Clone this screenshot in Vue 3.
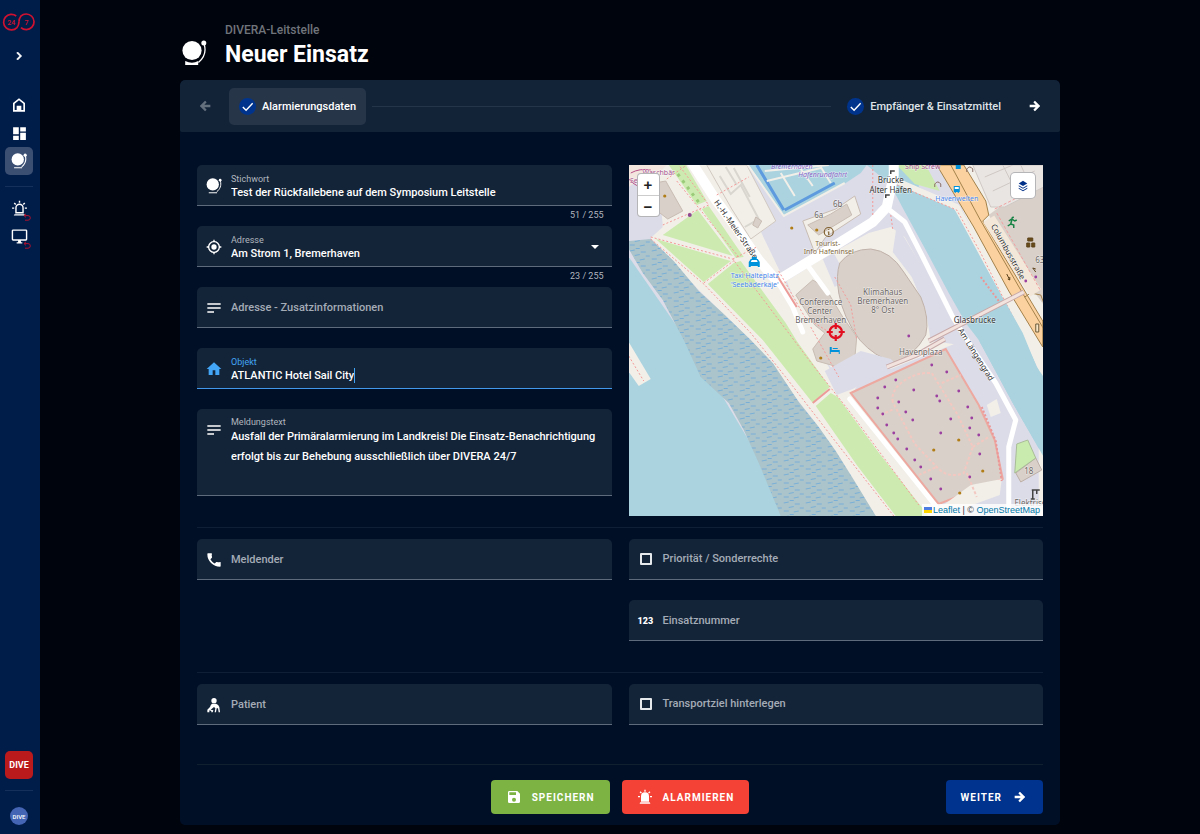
<script setup>
import { ref } from 'vue'

const icons = {
  chevron: 'M8.59,16.58L13.17,12L8.59,7.41L10,6L16,12L10,18L8.59,16.58Z',
  home: 'M12,2L3,9V22H21V9L12,2M18.500,19.500H15.500V13H8.500V19.500H5.500V10L12,5L18.500,10Z',
  dashboard: 'M13,3V9H21V3M13,21H21V11H13M3,21H11V15H3M3,13H11V3H3V13Z',
  alarmOutline:
    'M6,6.9L3.87,4.78L5.28,3.37L7.4,5.5L6,6.9M13,1V4H11V1H13M20.13,4.78L18,6.9L16.6,5.5L18.72,3.37L20.13,4.78M4.5,10.5V12.5H1.5V10.5H4.5M19.5,10.5H22.5V12.5H19.5V10.5M6,20H18A2,2 0 0,1 20,22H4A2,2 0 0,1 6,20M12,5A6,6 0 0,1 18,11V19H6V11A6,6 0 0,1 12,5M12,7A4,4 0 0,0 8,11V17H16V11A4,4 0 0,0 12,7Z',
  alarm:
    'M6,6.9L3.87,4.78L5.28,3.37L7.4,5.5L6,6.9M13,1V4H11V1H13M20.13,4.78L18,6.9L16.6,5.5L18.72,3.37L20.13,4.78M4.5,10.5V12.5H1.5V10.5H4.5M19.5,10.5H22.5V12.5H19.5V10.5M6,20H18A2,2 0 0,1 20,22H4A2,2 0 0,1 6,20M12,5A6,6 0 0,1 18,11V19H6V11A6,6 0 0,1 12,5Z',
  monitor:
    'M21,16H3V4H21M21,2H3C1.89,2 1,2.89 1,4V16A2,2 0 0,0 3,18H10V20H8V22H16V20H14V18H21A2,2 0 0,0 23,16V4C23,2.89 22.1,2 21,2Z',
  left: 'M20,10V14H11L14.5,17.5L12.08,19.92L4.16,12L12.08,4.08L14.5,6.5L11,10H20Z',
  right: 'M4,10V14H13L9.5,17.5L11.92,19.92L19.84,12L11.92,4.08L9.5,6.5L13,10H4Z',
  gps: 'M12,8A4,4 0 0,1 16,12A4,4 0 0,1 12,16A4,4 0 0,1 8,12A4,4 0 0,1 12,8M3.05,13H1V11H3.05C3.5,6.83 6.83,3.5 11,3.05V1H13V3.05C17.17,3.5 20.5,6.83 20.95,11H23V13H20.95C20.5,17.17 17.17,20.5 13,20.95V23H11V20.95C6.83,20.5 3.5,17.17 3.05,13M12,5A7,7 0 0,0 5,12A7,7 0 0,0 12,19A7,7 0 0,0 19,12A7,7 0 0,0 12,5Z',
  lines: 'M22,5V7H2V5H22M2,19H12V17H2V19M2,13H22V11H2V13Z',
  house: 'M10,21V14H14V21H20V12H23L12,2L1,12H4V21H10Z',
  phone:
    'M6.62,10.79C8.06,13.62 10.38,15.94 13.21,17.38L15.41,15.18C15.69,14.9 16.08,14.82 16.43,14.93C17.55,15.3 18.75,15.5 20,15.5A1,1 0 0,1 22,16.5V21A1,1 0 0,1 21,22A19,19 0 0,1 2,3A1,1 0 0,1 3,2H7.5A1,1 0 0,1 8.5,4C8.5,5.25 8.7,6.45 9.07,7.57C9.18,7.92 9.1,8.31 8.82,8.59L6.62,10.79Z',
  save: 'M15,9H5V5H15M12,19A3,3 0 0,1 9,16A3,3 0 0,1 12,13A3,3 0 0,1 15,16A3,3 0 0,1 12,19M17,3H5C3.89,3 3,3.9 3,5V19A2,2 0 0,0 5,21H19A2,2 0 0,0 21,19V7L17,3Z',
  down: 'M6,9L12,15L18,9H6Z',
}

const keyword = ref('Test der Rückfallebene auf dem Symposium Leitstelle')
const address = ref('Am Strom 1, Bremerhaven')
const addressInfo = ref('')
const place = ref('ATLANTIC Hotel Sail City')
const message = ref(
  'Ausfall der Primäralarmierung im Landkreis! Die Einsatz-Benachrichtigung erfolgt bis zur Behebung ausschließlich über DIVERA 24/7'
)
const reporter = ref('')
const priority = ref(false)
const number = ref('')
const patient = ref('')
const transport = ref(false)

const violet = [
  [303, 200], [318, 207], [267, 215], [256, 222], [249, 233], [249, 243], [254, 249], [258, 260],
  [265, 268], [269, 274], [278, 284], [286, 295], [292, 302], [302, 314], [312, 324], [285, 225],
  [270, 237], [277, 247], [284, 255], [308, 231], [311, 236], [330, 226], [339, 242], [343, 253],
  [341, 263], [350, 270], [322, 254], [312, 268], [351, 289], [341, 312], [280, 171], [407, 112], [397, 116],
]
const amber = [[330, 275], [305, 285], [354, 306], [331, 328], [36, 31], [163, 63], [188, 65], [192, 193]]
</script>

<template>
  <div class="app">
    <nav class="side" aria-label="Hauptmenü">
      <a href="#" class="side-item logo" aria-label="DIVERA 24/7">
        <svg width="34" height="20" viewBox="0 0 34 20">
          <g fill="none" stroke="#d01231" stroke-width="1.700">
            <path d="M14.200 4A7.800 7.800 0 1 0 15 15.600Q17 13 17 9.800" />
            <path d="M19 15.600A7.800 7.800 0 1 0 18.800 4.200Q17 6.500 17 9.800" />
          </g>
          <text x="9.300" y="12.600" text-anchor="middle">24</text>
          <text x="24.600" y="12.600" text-anchor="middle">7</text>
        </svg>
      </a>
      <button class="side-item chevron" aria-label="Menü öffnen">
        <svg class="i16" viewBox="0 0 24 24"><path :d="icons.chevron" stroke="#fff" /></svg>
      </button>
      <a href="#" class="side-item home" aria-label="Start"><svg class="i16" viewBox="0 0 24 24"><path fill-rule="evenodd" :d="icons.home" /></svg></a>
      <a href="#" class="side-item" aria-label="Übersicht"><svg class="i17" viewBox="0 0 24 24"><path :d="icons.dashboard" /></svg></a>
      <a href="#" class="side-item active" aria-label="Einsätze">
        <svg class="i16" viewBox="0 0 26 26">
          <circle cx="11" cy="10.500" r="10" /><circle cx="23" cy="3.500" r="2.600" />
          <path d="M5 24h13M23.400 5c1.800 7-.4 13-6 17.500" fill="none" stroke="#fff" stroke-width="1.800" />
        </svg>
      </a>
      <hr class="side-rule" />
      <a href="#" class="side-item" aria-label="Alarme">
        <svg class="i17" viewBox="0 0 24 24"><path fill-rule="evenodd" :d="icons.alarmOutline" /></svg>
        <svg class="back" viewBox="0 0 8 8"><path d="M3 .8 1 2.600 3 4.400M1.200 2.600H5A2.300 2.300 0 0 1 5 7.200H2" /></svg>
      </a>
      <a href="#" class="side-item" aria-label="Monitor">
        <svg class="i17" viewBox="0 0 24 24"><path fill-rule="evenodd" :d="icons.monitor" /></svg>
        <svg class="back" viewBox="0 0 8 8"><path d="M3 .8 1 2.600 3 4.400M1.200 2.600H5A2.300 2.300 0 0 1 5 7.200H2" /></svg>
      </a>
      <span class="grow"></span>
      <button class="side-item unit">DIVE</button>
      <hr class="side-rule" />
      <button class="avatar">DIVE</button>
    </nav>

    <main class="page">
      <header class="head">
        <svg class="head-icon" viewBox="0 0 26 26">
          <circle cx="11" cy="10.500" r="9.600" /><circle cx="22.800" cy="3" r="2.500" />
          <path d="M4.200 21q7 3.400 13 0v4H4.200z" />
          <path d="M23.400 5c1.800 7-.4 13-6 17.500" fill="none" stroke="#fff" stroke-width="1.300" />
        </svg>
        <div>
          <p class="sub">DIVERA-Leitstelle</p>
          <h1>Neuer Einsatz</h1>
        </div>
      </header>

      <form class="card" @submit.prevent>
        <div class="steps">
          <button type="button" class="arrow off" aria-label="Zurück" disabled><svg class="i16" viewBox="0 0 24 24"><path :d="icons.left" /></svg></button>
          <button type="button" class="step current"><span class="tick"><svg viewBox="0 0 16 16"><path d="M3 8.500 6.500 12 13.500 4.500" /></svg></span>Alarmierungsdaten</button>
          <span class="track"></span>
          <button type="button" class="step"><span class="tick"><svg viewBox="0 0 16 16"><path d="M3 8.500 6.500 12 13.500 4.500" /></svg></span>Empfänger &amp; Einsatzmittel</button>
          <button type="button" class="arrow" aria-label="Vorwärts"><svg class="i16" viewBox="0 0 24 24"><path :d="icons.right" /></svg></button>
        </div>

        <div class="body">
          <div class="cols">
            <div class="col">
              <div class="cell">
                <div class="field">
                  <svg class="i16" viewBox="0 0 26 26">
                    <circle cx="11" cy="10.500" r="10" /><circle cx="23" cy="3.500" r="2.200" />
                    <path d="M4.500 24h13.500M23.400 5c1.800 7-.4 13-6 17.500" fill="none" stroke="#fff" stroke-width="1.600" />
                  </svg>
                  <div class="text"><label for="keyword">Stichwort</label><input id="keyword" v-model="keyword" type="text" maxlength="255" /></div>
                </div>
                <div class="count">{{ keyword.length }} / 255</div>
              </div>
              <div class="cell">
                <div class="field">
                  <svg class="i16" viewBox="0 0 24 24"><path fill-rule="evenodd" :d="icons.gps" /></svg>
                  <div class="text"><label for="address">Adresse</label><input id="address" v-model="address" type="text" role="combobox" aria-expanded="false" maxlength="255" /></div>
                  <button type="button" class="drop" aria-label="Adressen anzeigen"><svg class="i16" viewBox="0 0 24 24"><path :d="icons.down" /></svg></button>
                </div>
                <div class="count">{{ address.length }} / 255</div>
              </div>
              <div class="cell">
                <div class="field">
                  <svg class="i16" viewBox="0 0 24 24"><path :d="icons.lines" /></svg>
                  <div class="text empty"><label for="info">Adresse - Zusatzinformationen</label><input id="info" v-model="addressInfo" type="text" /></div>
                </div>
              </div>
              <div class="cell">
                <div class="field focus">
                  <svg class="i16" viewBox="0 0 24 24"><path :d="icons.house" /></svg>
                  <div class="text">
                    <label for="place">Objekt</label>
                    <div class="typing"><input id="place" v-model="place" type="text" /><i class="caret"></i></div>
                  </div>
                </div>
              </div>
              <div class="cell">
                <div class="field area">
                  <svg class="i16" viewBox="0 0 24 24"><path :d="icons.lines" /></svg>
                  <div class="text"><label for="message">Meldungstext</label><textarea id="message" v-model="message" rows="3"></textarea></div>
                </div>
              </div>
            </div>

            <div class="map">
              <svg class="canvas" viewBox="0 0 415 351" preserveAspectRatio="xMidYMid slice" role="img" aria-label="Karte">
                <defs>
                  <pattern id="mud" width="22" height="14" patternUnits="userSpaceOnUse">
                    <rect width="22" height="14" fill="#abc3ca" />
                    <path d="M1 2l5-1M12 3h5M6 6.500l5-1M17 7h4M1 10h5M11 11l5-1M7 13.500h4" stroke="#78afd8" stroke-width="1" />
                  </pattern>
                </defs>
                <rect width="415" height="351" fill="#dcdce8" />
                <path fill="#f2efe9" d="M28 0H100L150 104 180 162 205 212 224 231 310 338 340 351H247L190 262 122 175 70 125 22 73 0 70 34 60z" />
                <path fill="#dcdce8" d="M0 20 26 38 34 62 22 73 0 75z" />
                <path fill="#aad3df" d="M0 92 75 200 165 351H0z" />
                <path fill="url(#mud)" d="M0 76 22 74 45 96 70 126 95 149 122 175 144 198 170 237 190 262 207 286 227 318 247 351H152L130 298 115 265 100 238 72 212 55 175 34 135 14 108 0 84z" />
                <path fill="#f2efe9" d="M0 177 22 214 10 221 0 207z" /><path class="foot" d="M0 191 15 216" />

                <g fill="#cdebb0">
                  <path d="M40 0H57L78 36 68 40z" />
                  <path d="M34 70 69 45 104 91z" /><path d="M27 74 102 96 75 117z" />
                  <path d="M73 44 80 41 115 92 107 93z" /><path d="M79 119 105 98 112 96 157 158 168 176 201 222 184 238 134 175z" />
                  <path d="M187 241 202 228 209 232 251 289 300 351H267L228 300z" />
                </g>
                <path d="M49 9 72 40" stroke="#9acb79" stroke-width="3" stroke-dasharray="3 5" />

                <path fill="#f2efe9" stroke="#d0c8c0" d="M78 0H118L147 56 122 74 103 44z" />
                <path d="M91 11 102 29 112 20 130 54 116 62M105 3 121 32M97 2 108 20" fill="none" stroke="#d9d5cf" stroke-width="2" />
                <path fill="#d9d0c9" stroke="#c9bdb4" d="M127 52 133 56 129 63 124 60z" />
                <path fill="#d9d0c9" stroke="#c9bdb4" d="M15 20 37 16 54 46 39 54 26 44z" />
                <path fill="#f2e6df" d="M0 0H38L30 8 12 14 0 22z" />
                <path d="M2 8q9-5 20-3M0 14q8 9 16 8" fill="none" stroke="#b94f86" />

                <path fill="#aad3df" d="M120 0 155 50 214 20 232 8 238 0z" />
                <path fill="none" stroke="#5d9ade" stroke-width="3" d="M128 0 155 45M156 45 206 18" />
                <path fill="none" stroke="#f2efe9" stroke-width="2" d="M119 0 155 51 216 18M136 6 200 0M152 8 166 31M172 4 184 21M138 16 192 3M192 2 202 18" />
                <path fill="#aad3df" d="M238 0H290V22L328 46 354 92 355 98 374 132 394 168 408 202 415 212V292L384 238 350 175 337 158 320 128 297 85 274 43 262 20z" />
                <path fill="#cdebb0" d="M268 0H297L311 26 286 19z" />
                <path fill="none" stroke="#f2efe9" stroke-width="6" d="M268 16 328 42 354 90 376 130 414 205" />
                <path class="foot" d="M268 20 328 45 352 88 372 128 412 205" />

                <path fill="#f2efe9" stroke="#c9bdb4" d="M174 56 207 44 226 31 232 49 197 72 186 88z" />
                <path fill="#d9d0c9" stroke="#c9bdb4" d="M179 60 202 49 218 39 223 50 190 70z" />
                <path fill="#f2efe9" d="M158 116 196 92 240 68 262 62 276 72 324 158 328 178 262 204 240 200 222 232 180 170z" />
                <path fill="#dcdce8" d="M194 94 205 88 219 114 206 122z M268 60 326 156 332 180 302 176 297 145 283 112 264 87z" />
                <path fill="#d9d0c9" stroke="#c0b2aa" d="M211 98Q222 84 242 84 262 86 275 107L292 132Q301 153 297 170 285 192 265 197 246 192 231 175 214 152 210 128 207 110 211 98z" />
                <path fill="#d9d0c9" stroke="#c9bdb4" d="M167 130 184 115 196 122 214 152 228 172 226 194 206 201 188 196 184 184 196 168 186 160z" />
                <path fill="#dcdce8" d="M196 206 232 186 262 194 268 200 224 224 208 230z" />

                <path fill="#f2efe9" d="M336 0H415V351H410V205L356 90 312 0z" />
                <path fill="#aad3df" d="M376 136 394 168 408 202 415 212V292L384 238 350 175z" />
                <path fill="#d9d0c9" d="M360 50 376 38 415 22V140L392 108z" />
                <path fill="#e9e5e2" stroke="#cfc8c4" d="M344 0H415V22L376 42 362 42z" />
                <path d="M356 12 384 0M364 26 406 6M374 0 390 32M392 0 404 26" stroke="#cfc8c4" fill="none" />
                <path fill="#fbd29f" stroke="#a3814b" d="M308 0H335L357 36 360 50 354 56 414 156V182L380 126 345 62z" />
                <path fill="none" stroke="#a3814b" d="M322 0 351 54 396 132 402 128 412 130 415 138M396 132 415 164" />
                <path fill="none" stroke="#f2e7d8" stroke-width="13" d="M360 54 407 128" />
                <path fill="none" stroke="#f1a0a0" stroke-dasharray="3 2" d="M366 44 386 34M368 48 412 126" />

                <path fill="none" stroke="#fff" stroke-width="10" stroke-linecap="round" d="M62-4 87 35 107 62 130 95 148 116 207 80 244 57 258 42 265 10V-4" />
                <path fill="none" stroke="#fff" stroke-width="5" stroke-linecap="round" stroke-linejoin="round" d="M146 112 164 142 174 167M262 46 276 57 294 92 324 152 344 184 367 218 387 255 380 282V345M180 102 199 128M221 234 307 341" />
                <path fill="none" stroke="#c7a9a9" stroke-width="5" d="M300 176 395 127M258 202 288 190 316 174" />
                <path fill="none" stroke="#f3e3df" stroke-width="3" d="M300 176 395 127M258 202 288 190 316 174" />

                <path fill="#d9d0c9" stroke="#eda8a0" stroke-width="2" d="M222 228 317 184 350 240 366 275 374 314 310 339z" />
                <path fill="#f2efe9" d="M342 320 373 314 371 330 338 342 312 342zM358 240 368 234 372 248 362 252z" />
                <path fill="none" stroke="#f3c8c0" stroke-width="2" stroke-dasharray="3 2" d="M264 237Q262 225 275 216T303 208L329 250 344 282 335 308Q320 314 309 303L286 279zM313 218 332 210M252 250 265 244M344 282 360 272M290 310 308 302M338 308 348 332" />
                <path fill="#d9d0c9" stroke="#bdb0a8" d="M387 308 407 293 413 305 392 317z" />
                <path fill="#c9ebae" stroke="#a9bc98" d="M388 279 399 275 407 293 386 308z" />
                <g class="foot">
                  <path d="M22 74 75 119 122 168 160 216 204 273 265 351" /><path d="M22 72 104 94 184 200 222 248 290 340" />
                  <path d="M34 60 80 40 50 0M75 118 106 95M48 16 110 92M104 94 128 82M88 30 120 12M38 14 58 0" />
                  <path d="M150 106 176 152 205 170M182 162 210 212M262 50 264 64M244 0 244 50M206 112 222 140 228 175" />
                </g>
                <path d="M184 238 201 224M148 110 168 142" stroke="#ed9b98" stroke-width="2" />
                <path fill="none" stroke="#eb9797" stroke-width="2" stroke-dasharray="2 2" d="M353 242 367 276 373 316M352 112 370 136" />

                <circle v-for="(p, i) in violet" :key="'v' + i" :cx="p[0]" :cy="p[1]" r="1.400" fill="#9b3fa0" />
                <circle v-for="(p, i) in amber" :key="'a' + i" :cx="p[0]" :cy="p[1]" r="1.600" fill="#b07d17" />
                <circle cx="61" cy="50" r="2" fill="#8d4c92" />

                <g class="t" text-anchor="middle">
                  <g class="shop"><text x="30" y="10">Waschbär</text><text x="16" y="18">Seevogel</text><text x="294" y="4">Ship Screw</text></g>
                  <g class="violet"><text x="163" y="4">Bremerhaven</text><text x="194" y="12">Hafenrundfahrt</text></g>
                  <g class="blue"><text x="126" y="113">Taxi Halteplatz</text><text x="126" y="122">'Seebäderkaje'</text><text x="328" y="36">Havenwelten</text></g>
                  <g class="brown"><text x="199" y="81">Tourist-</text><text x="200" y="89">Info Hafeninsel</text></g>
                  <g class="grey">
                    <text x="192" y="140">Conference</text><text x="191" y="149">Center</text><text x="192" y="158">Bremerhaven</text>
                    <text x="254" y="130">Klimahaus</text><text x="254" y="139">Bremerhaven</text><text x="254" y="148">8° Ost</text>
                    <text x="292" y="190">Havenplaza</text><text x="190" y="53">6a</text><text x="209" y="42">6b</text>
                    <text x="400" y="309">18</text><text x="411" y="98">63</text><text x="406" y="341">Elektrische</text>
                  </g>
                  <g class="dark">
                    <text x="262" y="18">Brücke</text><text x="262" y="28">Alter Hafen</text><text x="346" y="158">Glasbrücke</text>
                    <text transform="translate(105 66) rotate(55)">H.-H.-Meier-Straße</text>
                    <text transform="translate(377 88) rotate(61)">Columbusstraße</text>
                    <text transform="translate(345 191) rotate(58)">Am Längengrad</text>
                  </g>
                </g>
                <g fill="#0092da">
                  <path d="M120 102v-5l2-3h7l2 3v5h-2v-1h-7v1zM123 92h5v2h-5z" /><path fill="#fff" d="M123 95h5l1 2h-7z" />
                  <path d="M201 182h2v3h8v4h-1v-2h-8v2h-1zM204 183h5v1h-5z" />
                  <path d="M325 21h6v6h-1v1h-1v-1h-2v1h-1v-1h-1zM327 0h5v4h-5z" /><path fill="#fff" d="M326 22h4v2h-4z" />
                </g>
                <g fill="none" stroke="#806030" stroke-width="1.200"><circle cx="200" cy="67" r="4.500" /><path d="M199 67h1v3M200 64v1" /></g>
                <path d="M383 53l2-1M380 56l3-2 3 2 2-1M383 55l-1 4-3 2M382 59l3 1v3" stroke="#168244" stroke-width="1.500" fill="none" />
                <path d="M399 73h5v3h-5zM398 78h3v4h-3zM403 78h3v4h-3z" fill="#694b17" stroke="#5c431d" />
                <path d="M407 107l-3-4 3 1M381 115l-3-6M381 115v-3M381 115l-2-1" fill="none" stroke="#5c431d" />
                <path d="M262 9v-3h4M257 33v-3h4M403 325h8M404 325v9M408 325v4M402 334h4" fill="none" stroke="#444" stroke-width="1.500" />
                <path d="M306 22v-3q3-4 6 0v3M338 7v-3q3-4 6 0v3" fill="none" stroke="#8a6c65" />
                <path fill="#f7e6c8" stroke="#6b5a3a" d="M407 159h3v8h-3z" />

                <g fill="none" stroke="#e20f20" stroke-width="2.200"><circle cx="207" cy="167" r="6.200" /><path d="M207 158v6M207 170v6M198 167h6M210 167h6" /></g>
              </svg>
              <div class="zoom"><button type="button" aria-label="Vergrößern">+</button><button type="button" aria-label="Verkleinern">−</button></div>
              <button type="button" class="layers" aria-label="Kartenebenen">
                <svg viewBox="0 0 14 14"><path d="M7 1 12 4 7 7 2 4z" /><path d="M2 6 7 9 12 6V7.200L7 10.200 2 7.200zM2 9 7 12 12 9V10.200L7 13.200 2 10.200z" /></svg>
              </button>
              <div class="credit">
                <svg width="8" height="6" viewBox="0 0 8 6"><path fill="#4c7be1" d="M0 0h8v3H0z" /><path fill="#ffd500" d="M0 3h8v3H0z" /></svg>
                <a href="#">Leaflet</a> | © <a href="#">OpenStreetMap</a>
              </div>
            </div>
          </div>

          <hr class="rule" />

          <div class="cols">
            <div class="col">
              <div class="cell">
                <div class="field">
                  <svg class="i16" viewBox="0 0 24 24"><path :d="icons.phone" /></svg>
                  <div class="text empty"><label for="reporter">Meldender</label><input id="reporter" v-model="reporter" type="text" /></div>
                </div>
              </div>
            </div>
            <div class="col">
              <div class="cell"><label class="field check"><input v-model="priority" type="checkbox" />Priorität / Sonderrechte</label></div>
              <div class="cell">
                <div class="field">
                  <span class="digits" aria-hidden="true">123</span>
                  <div class="text empty"><label for="number">Einsatznummer</label><input id="number" v-model="number" type="text" /></div>
                </div>
              </div>
            </div>
          </div>

          <hr class="rule" />

          <div class="cols">
            <div class="cell">
              <div class="field">
                <svg class="i16" viewBox="0 0 24 24">
                  <circle cx="12" cy="5.500" r="4" />
                  <path d="M9 10h6q4 1 5 5l1 8h-2l-1-6h-2l-1 6h-2l1-6-2-2-5 4 4 1-1 3H8v-2l-3-1v3H2v-4l4-4q1-4 3-5z" />
                </svg>
                <div class="text empty"><label for="patient">Patient</label><input id="patient" v-model="patient" type="text" /></div>
              </div>
            </div>
            <div class="cell"><label class="field check"><input v-model="transport" type="checkbox" />Transportziel hinterlegen</label></div>
          </div>

          <footer class="actions">
            <span></span>
            <div class="mid">
              <button type="button" class="btn green"><svg class="i16" viewBox="0 0 24 24"><path fill-rule="evenodd" :d="icons.save" /></svg>Speichern</button>
              <button type="button" class="btn red"><svg class="i16" viewBox="0 0 24 24"><path :d="icons.alarm" /></svg>Alarmieren</button>
            </div>
            <button type="submit" class="btn blue">Weiter<svg class="i16" viewBox="0 0 24 24"><path :d="icons.right" /></svg></button>
          </footer>
        </div>
      </form>
    </main>
  </div>
</template>

<style>
body {
  background: #00040d;
}
</style>

<style scoped>
* {
  box-sizing: border-box;
}
.app {
  display: flex;
  min-height: 100vh;
  font-family: Roboto, "Liberation Sans", sans-serif;
  font-size: 11px;
  font-weight: 500;
  color: #fff;
}
button,
input,
textarea {
  font: inherit;
  color: inherit;
  background: none;
  border: 0;
  padding: 0;
  margin: 0;
  outline: 0;
}
button {
  cursor: pointer;
}
svg {
  fill: #fff;
  flex: none;
  display: block;
}
.i16 {
  width: 16px;
  height: 16px;
}
.i17 {
  width: 17px;
  height: 17px;
}
.side {
  position: sticky;
  top: 0;
  width: 40px;
  height: 100vh;
  flex: none;
  display: flex;
  flex-direction: column;
  padding: 8px 7px 9px 5px;
  background: #001c49;
}
.side-item {
  position: relative;
  height: 28px;
  flex: none;
  display: flex;
  align-items: center;
  justify-content: center;
  border-radius: 5px;
}
.logo text {
  font-size: 7px;
  font-weight: 500;
  fill: #d01231;
}
.chevron {
  margin-top: 6px;
}
.home {
  margin-top: 21px;
}
.active {
  background: #3b4f73;
}
.side-rule {
  width: 100%;
  height: 1px;
  margin: 11px 0 7px;
  border: 0;
  flex: none;
  background: #14305b;
}
.back {
  position: absolute;
  right: 2px;
  bottom: 1px;
  width: 8px;
  height: 8px;
  fill: none;
  stroke: #b0122f;
}
.grow {
  flex: 1;
}
.unit {
  background: #bb1a1d;
  font-size: 9px;
  font-weight: 700;
}
.avatar {
  width: 18px;
  height: 18px;
  margin: 9px auto 0;
  border-radius: 50%;
  background: #4464b4;
  font-size: 6px;
  flex: none;
}
.page {
  flex: 1;
  min-width: 0;
  padding: 22px 20px 9px;
}
.head,
.card {
  max-width: 880px;
  margin: 0 auto;
}
.head {
  display: flex;
  align-items: flex-end;
  gap: 18px;
  padding: 0 1px 9px;
}
.head-icon {
  width: 26px;
  height: 26px;
  margin-bottom: 5px;
}
.sub,
h1 {
  margin: 0;
}
.sub {
  font-size: 12px;
  line-height: 17px;
  color: #70747b;
}
h1 {
  font-size: 23px;
  line-height: 32px;
  font-weight: 700;
}
.card {
  background: #000f26;
  border-radius: 5px;
  overflow: hidden;
}
.steps {
  display: flex;
  align-items: center;
  height: 52px;
  padding: 0 16px;
  background: #122338;
  border-radius: 5px 5px 2px 2px;
}
.arrow {
  width: 18px;
  height: 18px;
  display: flex;
  align-items: center;
  justify-content: center;
}
.off {
  opacity: 0.35;
}
.step {
  display: flex;
  align-items: center;
  gap: 6px;
  height: 37px;
  padding: 0 10px;
  margin-right: 15px;
  border-radius: 5px;
  color: #dfe3e8;
}
.current {
  margin: 0 0 0 15px;
  background: #263548;
  color: #fff;
}
.tick {
  width: 17px;
  height: 17px;
  padding: 1px;
  border-radius: 50%;
  background: #00348c;
}
.tick svg {
  fill: none;
  stroke: #fff;
  stroke-width: 1.5;
}
.track {
  flex: 1;
  height: 1px;
  margin: 0 6px;
  background: #243449;
}
.body {
  padding: 33px 17px 11px;
}
.cols {
  display: grid;
  grid-template-columns: repeat(2, minmax(0, 1fr));
  gap: 17px;
}
.cell {
  position: relative;
  padding-bottom: 20px;
}
.field {
  display: flex;
  align-items: center;
  gap: 9px;
  height: 41px;
  padding: 1px 9px 0;
  background: #142438;
  border-bottom: 1px solid #5d6b7d;
  border-radius: 5px 5px 0 0;
}
.text {
  flex: 1;
  min-width: 0;
  display: flex;
  flex-direction: column;
}
.text label {
  font-size: 9px;
  font-weight: 400;
  line-height: 12px;
  padding-top: 1px;
  color: #b0b6bf;
}
.text input {
  width: 100%;
  height: 15px;
  line-height: 15px;
}
.empty {
  display: grid;
}
.empty label,
.empty input {
  grid-area: 1 / 1;
}
.empty label,
.check {
  padding-top: 0;
  font-size: 11px;
  font-weight: 500;
  line-height: 16px;
  color: #a4acb7;
}
.count {
  position: absolute;
  right: 8px;
  bottom: 4px;
  font-size: 9px;
  font-weight: 400;
  line-height: 14px;
  color: #b0b6bf;
}
.drop {
  height: 16px;
}
.focus {
  border-color: #4298ea;
}
.focus svg {
  fill: #42a5f5;
}
.focus label {
  color: #42a5f5;
}
.typing {
  display: flex;
}
.typing input {
  width: auto;
  field-sizing: content;
}
.caret {
  width: 1px;
  height: 15px;
  background: #42a5f5;
}
.area {
  height: 87px;
  align-items: flex-start;
  padding: 9px 8px 0 9px;
}
.area svg {
  margin-top: 4px;
}
.area label {
  line-height: 9px;
  padding-top: 0;
}
.area textarea {
  display: block;
  height: 60px;
  line-height: 20px;
  resize: none;
  overflow: hidden;
}
.check input {
  appearance: none;
  width: 12px;
  height: 12px;
  margin: 2px;
  border: 2px solid #e6e9ec;
  border-radius: 1px;
}
.digits {
  width: 16px;
  font-size: 9px;
  font-weight: 900;
}
.rule {
  height: 1px;
  margin: 11px 0;
  border: 0;
  background: #0f2036;
}
.map {
  position: relative;
  overflow: hidden;
  font-size: 9px;
  font-weight: 400;
  color: #333;
}
.canvas {
  position: absolute;
  width: 100%;
  height: 100%;
}
.foot {
  fill: none;
  stroke: #f49a98;
  stroke-width: 1;
  stroke-dasharray: 2 2;
}
.t {
  font: 7px "Noto Sans", sans-serif;
  paint-order: stroke;
  stroke: rgba(255, 255, 255, 0.6);
  stroke-width: 1px;
}
.shop {
  fill: #a6518d;
}
.violet {
  fill: #8461c4;
  font-style: italic;
}
.blue {
  fill: #4585ec;
}
.brown {
  fill: #82693d;
}
.grey {
  fill: #6b6664;
}
.dark {
  fill: #333;
}
.dark,
.grey {
  font-size: 8px;
}
.zoom {
  position: absolute;
  left: 9px;
  top: 9px;
  width: 21px;
  border-radius: 3px;
  background: #fff;
  box-shadow: 0 0 0 1px #b5b5b8;
}
.zoom button {
  display: block;
  width: 100%;
  height: 21px;
  font: 700 15px "Liberation Sans", sans-serif;
  color: #222;
}
.zoom button + button {
  border-top: 1px solid #ccc;
}
.layers {
  position: absolute;
  right: 8px;
  top: 8px;
  width: 24px;
  height: 25px;
  display: flex;
  align-items: center;
  justify-content: center;
  border-radius: 4px;
  background: #fff;
  box-shadow: 0 0 0 1px #b5b5b8;
}
.layers svg {
  width: 12px;
  height: 14px;
  fill: #003087;
}
.credit {
  position: absolute;
  right: 0;
  bottom: 0;
  padding: 0 3px 0 2px;
  font-family: "Liberation Sans", sans-serif;
  line-height: 12px;
  background: rgba(255, 255, 255, 0.8);
}
.credit svg {
  display: inline-block;
  margin-right: 1px;
}
.credit a {
  color: #0078a8;
  text-decoration: none;
}
.actions {
  display: grid;
  grid-template-columns: 1fr auto 1fr;
  margin-top: 19px;
  padding-top: 15px;
  border-top: 1px solid #11202f;
}
.mid {
  display: flex;
  gap: 12px;
}
.btn {
  display: flex;
  align-items: center;
  gap: 10px;
  height: 34px;
  padding: 0 15px;
  border-radius: 4px;
  font-size: 10px;
  font-weight: 700;
  letter-spacing: 1px;
  text-transform: uppercase;
}
.green {
  background: #7cb342;
}
.red {
  background: #f44336;
}
.blue.btn {
  justify-self: end;
  background: #00338d;
}
</style>
